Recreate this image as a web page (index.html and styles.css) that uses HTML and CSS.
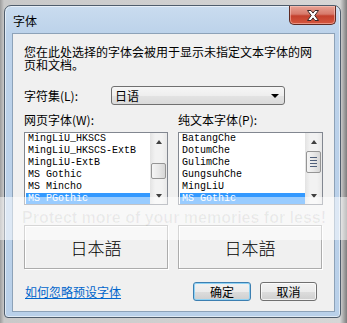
FILE: index.html
```html
<!DOCTYPE html>
<html lang="zh-CN">
<head>
    <meta charset="UTF-8">
    <title>字体</title>
    <link rel="stylesheet" href="styles.css">
</head>
<body>
    <div class="window">
        <div class="titlebar">
            <span class="title">字体</span>
            <div class="close">
                <svg width="14" height="11" viewBox="0 0 14 11">
                    <path d="M1.5 0.5h3.5l2 2.6 2-2.6h3.5l-3.7 5 3.7 5h-3.5l-2-2.6-2 2.6h-3.5l3.7-5z" fill="#fff" stroke="#3b2a2a" stroke-width="1"/>
                </svg>
            </div>
        </div>
        <div class="client">
            <p class="desc">您在此处选择的字体会被用于显示未指定文本字体的网页和文档。</p>
            <div class="charset">
                <span class="charset-label">字符集(L):</span>
                <div class="combo">
                    <span>日语</span>
                    <span class="combo-arrow"></span>
                </div>
            </div>
            <div class="fonts">
                <div class="col">
                    <div class="label">网页字体(W):</div>
                    <div class="list">
                        <div class="items">
                            <div class="item">MingLiU_HKSCS</div>
                            <div class="item">MingLiU_HKSCS-ExtB</div>
                            <div class="item">MingLiU-ExtB</div>
                            <div class="item">MS Gothic</div>
                            <div class="item">MS Mincho</div>
                            <div class="item sel">MS PGothic</div>
                        </div>
                        <div class="scrollbar">
                            <div class="sb-btn"><span class="tri-up"></span></div>
                            <div class="track">
                                <div class="thumb thumb-small"></div>
                            </div>
                            <div class="sb-btn"><span class="tri-down"></span></div>
                        </div>
                    </div>
                    <div class="sample">日本語</div>
                </div>
                <div class="col">
                    <div class="label">纯文本字体(P):</div>
                    <div class="list">
                        <div class="items">
                            <div class="item">BatangChe</div>
                            <div class="item">DotumChe</div>
                            <div class="item">GulimChe</div>
                            <div class="item">GungsuhChe</div>
                            <div class="item">MingLiU</div>
                            <div class="item sel">MS Gothic</div>
                        </div>
                        <div class="scrollbar">
                            <div class="sb-btn"><span class="tri-up"></span></div>
                            <div class="track">
                                <div class="thumb thumb-big"><span class="grip"></span></div>
                            </div>
                            <div class="sb-btn"><span class="tri-down"></span></div>
                        </div>
                    </div>
                    <div class="sample">日本語</div>
                </div>
            </div>
            <div class="footer">
                <a class="link" href="#">如何忽略预设字体</a>
                <div class="buttons">
                    <div class="btn btn-default">确定</div>
                    <div class="btn">取消</div>
                </div>
            </div>
        </div>
    </div>
    <div class="watermark">Protect more of your memories for less!</div>
</body>
</html>
```
FILE: styles.css
```css
body {
    margin: 0;
    padding: 5px 0 0 4px;
    width: 347px;
    height: 323px;
    box-sizing: border-box;
    overflow: hidden;
    position: relative;
    background: linear-gradient(90deg, #9c9c9c 0, #c9c9c9 4px, #d6d6d6 340px, #7d7d7d 347px);
    font-family: "Noto Sans CJK SC", "Liberation Sans", sans-serif;
    font-size: 12px;
    color: #000;
}
.window {
    width: 337px;
    height: 313px;
    box-sizing: border-box;
    border: 1px solid #4f5d6c;
    border-radius: 7px 7px 4px 4px;
    padding: 0 5px 5px 7px;
    background: linear-gradient(180deg, #cadcef 0, #bcd2ea 28px, #b9d0e9 100%);
    box-shadow: inset 0 0 0 1px rgba(255, 255, 255, 0.55);
    display: flex;
    flex-direction: column;
}
.titlebar {
    height: 27px;
    display: flex;
    align-items: flex-start;
}
.title {
    margin: 8px 0 0 1px;
    line-height: 13px;
    color: #000;
}
.close {
    margin-left: auto;
    margin-right: -1px;
    width: 47px;
    height: 19px;
    box-sizing: border-box;
    border: 1px solid #5e2a22;
    border-top: none;
    border-radius: 0 0 5px 5px;
    background: linear-gradient(180deg, #e8a294 0, #d7796a 45%, #c4402c 55%, #d5573f 100%);
    box-shadow: inset 0 0 0 1px rgba(255, 210, 200, 0.5);
    display: flex;
    align-items: center;
    justify-content: center;
}
.client {
    flex: 1;
    background: #f0f0f0;
    border: 1px solid #8da2b8;
    padding: 0 11px;
}
.desc {
    margin: 11px 0 0;
    line-height: 13px;
    width: 298px;
}
.charset {
    margin-top: 15px;
    display: flex;
    align-items: center;
}
.charset-label {
    width: 87px;
    line-height: 13px;
}
.combo {
    width: 174px;
    height: 19px;
    box-sizing: border-box;
    border: 1px solid #707070;
    border-radius: 3px;
    background: linear-gradient(180deg, #f6f6f6 0, #eeeeee 50%, #e3e3e3 51%, #dadada 100%);
    display: flex;
    align-items: center;
    padding: 0 5px 0 3px;
    line-height: 13px;
}
.combo-arrow {
    margin-left: auto;
    width: 0;
    height: 0;
    border-left: 4px solid transparent;
    border-right: 4px solid transparent;
    border-top: 4px solid #000;
}
.fonts {
    margin-top: 8px;
    display: grid;
    grid-template-columns: 144px 145px;
    column-gap: 10px;
}
.label {
    line-height: 13px;
}
.list {
    margin-top: 6px;
    height: 73px;
    box-sizing: border-box;
    border: 1px solid #828790;
    background: #fff;
    display: flex;
    padding-left: 1px;
}
.items {
    flex: 1;
    overflow: hidden;
    font-family: "Liberation Mono", monospace;
    font-size: 10px;
    line-height: 12px;
}
.item {
    height: 12px;
    padding-left: 2px;
    white-space: nowrap;
}
.sel {
    background: #3399ff;
    color: #fff;
}
.scrollbar {
    width: 17px;
    display: flex;
    flex-direction: column;
    background: linear-gradient(90deg, #e3e3e3 0, #f2f2f2 30%, #f2f2f2 70%, #e8e8e8 100%);
}
.sb-btn {
    height: 17px;
    display: flex;
    align-items: center;
    justify-content: center;
}
.tri-up {
    border-left: 3.5px solid transparent;
    border-right: 3.5px solid transparent;
    border-bottom: 4px solid #404040;
}
.tri-down {
    border-left: 3.5px solid transparent;
    border-right: 3.5px solid transparent;
    border-top: 4px solid #404040;
}
.track {
    flex: 1;
}
.thumb {
    margin: 0 1px;
    box-sizing: border-box;
    border: 1px solid #959595;
    border-radius: 2px;
    background: linear-gradient(90deg, #f5f5f5 0, #e8e8e8 50%, #d6d6d6 100%);
    display: flex;
    align-items: center;
    justify-content: center;
}
.thumb-small {
    margin-top: 13px;
    height: 16px;
}
.thumb-big {
    margin-top: 1px;
    height: 22px;
}
.grip {
    width: 7px;
    height: 10px;
    background: repeating-linear-gradient(180deg, #4f5f7a 0, #4f5f7a 1px, transparent 1px, transparent 3px);
}
.sample {
    margin-top: 20px;
    width: 144px;
    height: 44px;
    box-sizing: border-box;
    border: 1px solid #acacac;
    box-shadow: inset 1px 1px 0 #fff, 1px 1px 0 #fff;
    display: flex;
    align-items: center;
    justify-content: center;
    font-family: "Noto Sans CJK JP", sans-serif;
    font-size: 17px;
    font-weight: 300;
}
.footer {
    margin-top: 13px;
    display: flex;
    align-items: center;
    justify-content: space-between;
}
.link {
    margin-left: 1px;
    color: #0066cc;
    text-decoration: underline;
    line-height: 13px;
}
.buttons {
    display: flex;
    gap: 9px;
    margin-right: 6px;
}
.btn {
    width: 57px;
    height: 19px;
    box-sizing: border-box;
    border: 1px solid #707070;
    border-radius: 3px;
    background: linear-gradient(180deg, #f2f2f2 0, #ebebeb 50%, #dddddd 51%, #cfcfcf 100%);
    box-shadow: inset 0 0 0 1px rgba(255, 255, 255, 0.7);
    display: flex;
    align-items: center;
    justify-content: center;
    line-height: 13px;
}
.btn-default {
    width: 58px;
    border-color: #3c7fb1;
    box-shadow: inset 0 0 0 1px #8fd2f4;
}
.watermark {
    position: absolute;
    top: 197px;
    left: 0;
    width: 347px;
    height: 43px;
    box-sizing: border-box;
    padding: 12px 0 0 22px;
    background: rgba(255, 255, 255, 0.5);
    color: rgba(0, 0, 0, 0.06);
    font-family: "Liberation Sans", sans-serif;
    font-weight: bold;
    font-size: 16px;
    line-height: 18px;
    white-space: nowrap;
}
```
